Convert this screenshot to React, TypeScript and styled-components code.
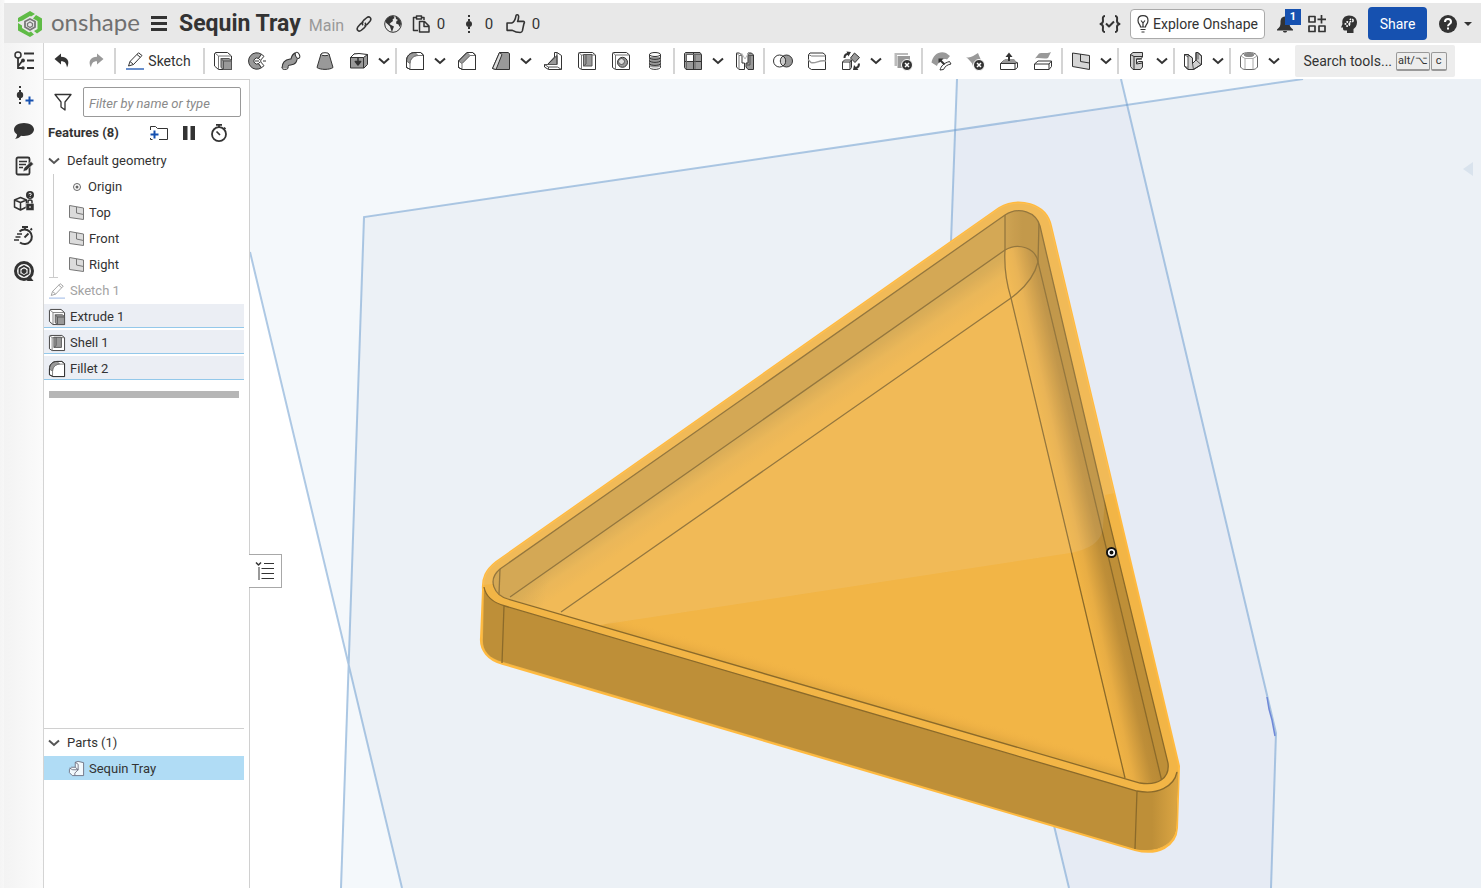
import React from "react";
import styled, { createGlobalStyle, css } from "styled-components";

const Global = createGlobalStyle`
  *, *::before, *::after { box-sizing: border-box; }
  body { margin: 0; background: #fff; }
  button, input { font: inherit; color: inherit; }
  svg { flex: none; }
`;

/* ---------- layout ---------- */

const Page = styled.div`
  display: flex;
  flex-direction: column;
  height: 100vh;
  padding: 3px 0 0 4px;
  overflow: hidden;
  background: linear-gradient(to right, #f4f4f4 0, #f7f7f7 4px, #fff 5px);
  color: #333;
  font-family: Roboto, "Liberation Sans", sans-serif;
  font-size: 14px;
  line-height: 20px;
`;

const Header = styled.header`
  display: flex;
  align-items: center;
  flex: none;
  height: 40px;
  padding: 1px 6px 0 13px;
  background: #e8e8e8;
`;

const Spacer = styled.div`
  flex: 1;
`;

const Body = styled.div`
  display: flex;
  flex: 1;
  min-height: 0;
`;

const Rail = styled.nav`
  display: flex;
  flex-direction: column;
  flex: none;
  width: 40px;
  border-right: 1px solid #d4d4d4;
  background: linear-gradient(to right, #f3f3f3, #fbfbfb);
`;

const Workspace = styled.main`
  display: flex;
  flex-direction: column;
  flex: 1;
  min-width: 0;
`;

const Toolbar = styled.div`
  display: flex;
  align-items: center;
  flex: none;
  height: 36px;
  padding-left: 1px;
  background: #fff;
`;

const Split = styled.div`
  display: flex;
  flex: 1;
  min-height: 0;
`;

const Sidebar = styled.aside`
  display: flex;
  flex-direction: column;
  flex: none;
  width: 206px;
  border: solid #d0d0d0;
  border-width: 1px 1px 0 0;
  background: #fff;
`;

const Viewport = styled.section`
  position: relative;
  flex: 1;
  min-width: 0;
  background: #fff;
`;

/* ---------- controls ---------- */

const bare = css`
  display: flex;
  align-items: center;
  justify-content: center;
  flex: none;
  padding: 0;
  border: 0;
  background: none;
  cursor: pointer;
`;

const RailButton = styled.button`
  ${bare}
  height: 35px;
`;

const ToolButton = styled.button`
  ${bare}
  width: 34px;
  height: 32px;
`;

const ChevronButton = styled.button`
  ${bare}
  width: 18px;
  height: 32px;
  padding-right: 2px;
`;

const SketchButton = styled.button`
  ${bare}
  gap: 4px;
  width: 85px;
  height: 32px;
  padding-right: 2px;
`;

const Separator = styled.span`
  flex: none;
  width: 2px;
  height: 26px;
  margin: 0 1px;
  background: #d4d4d4;
`;

const SearchButton = styled.button`
  ${bare}
  gap: 4px;
  width: 160px;
  height: 32px;
  margin-left: 11px;
  border-radius: 2px;
  background: #ededed;
`;

const Keys = styled.span`
  display: flex;
  gap: 1px;
`;

const Key = styled.kbd`
  display: flex;
  align-items: center;
  height: 19px;
  padding: 0 4px;
  border: 1px solid #999;
  border-bottom-width: 2px;
  border-radius: 2px;
  font-family: inherit;
  font-size: 11px;
  &:first-child { padding: 0 1px; }
`;

const HeaderButton = styled.button<{ $w: number }>`
  ${bare}
  width: ${(p) => p.$w}px;
  height: 32px;
`;

const Brand = styled.a`
  display: flex;
  align-items: center;
  gap: 8px;
  width: 127px;
  color: #707070;
  font-family: Lato, sans-serif;
  font-size: 24px;
  line-height: 30px;
  text-decoration: none;
`;

const BrandText = styled.span`
  padding-bottom: 4px;
`;

const Title = styled.h1`
  margin: 0 8px 0 5px;
  font-size: 23px;
  line-height: 32px;
  font-weight: 700;
  white-space: nowrap;
`;

const Branch = styled.span`
  width: 42px;
  padding-top: 4px;
  color: #999;
  font-size: 16px;
`;

const Counters = styled.div`
  display: flex;
  padding-left: 2px;
`;

const Counter = styled.button<{ $w: number; $gap?: number }>`
  ${bare}
  justify-content: flex-start;
  gap: ${(p) => p.$gap ?? 7}px;
  width: ${(p) => p.$w}px;
  font-size: 15px;
`;

const ExploreButton = styled.button`
  ${bare}
  gap: 4px;
  width: 135px;
  height: 30px;
  margin: 0 6px 0 5px;
  border: 1px solid #aaa;
  border-radius: 4px;
  background: #fff;
`;

const BellButton = styled.button`
  ${bare}
  position: relative;
  width: 28px;
  height: 32px;
`;

const Badge = styled.span`
  position: absolute;
  top: 1px;
  right: -2px;
  width: 16px;
  height: 16px;
  background: #1651b0;
  color: #fff;
  font-size: 11px;
  font-weight: 700;
  line-height: 16px;
`;

const ShareButton = styled.button`
  ${bare}
  width: 59px;
  height: 33px;
  margin: 0 8px 0 4px;
  border-radius: 4px;
  background: #1651b0;
  color: #fff;
`;

/* ---------- feature list ---------- */

const FilterRow = styled.div`
  display: flex;
  align-items: center;
  gap: 11px;
  padding: 7px 8px 0 10px;
`;

const FilterInput = styled.input`
  flex: 1;
  min-width: 0;
  height: 30px;
  padding: 2px 5px 0;
  border: 1px solid #999;
  border-radius: 2px;
  font-style: italic;
  font-size: 13px;
  &::placeholder { color: #8a8a8a; opacity: 1; }
`;

const FeatureHead = styled.div`
  display: flex;
  align-items: center;
  height: 31px;
  padding: 1px 15px 0 4px;
`;

const FeatureTitle = styled.h2`
  flex: 1;
  margin: 0;
  font-size: 13px;
  font-weight: 700;
`;

const HeadButton = styled.button`
  ${bare}
  width: 30px;
  height: 26px;
`;

const List = styled.ul`
  margin: 0;
  padding: 0;
  list-style: none;
`;

const Row = styled.li<{ $kind?: "group" | "plain" | "off" | "used" | "picked"; $indent?: number }>`
  display: flex;
  align-items: center;
  gap: ${(p) => (p.$kind === "group" ? 7 : 5)}px;
  height: 24px;
  margin: 0 5px 2px 0;
  padding: 1px 0 0 ${(p) => p.$indent ?? (p.$kind === "group" ? 4 : 5)}px;
  font-size: 13px;
  color: ${(p) => (p.$kind === "off" ? "#a3a3a3" : "#333")};
  ${(p) => p.$kind === "used" && "background: #ebeef4; box-shadow: inset 0 -1px #93c8ea;"}
  ${(p) => p.$kind === "picked" && "background: #b0dcf5;"}
`;

const Nested = styled.ul`
  position: relative;
  margin: 0 0 0 9px;
  padding: 0;
  border-left: 1px solid #ccc;
  list-style: none;
  &::after {
    content: "";
    position: absolute;
    left: -5px;
    bottom: 0;
    width: 9px;
    height: 1px;
    background: #ccc;
  }
`;

const RollbackBar = styled.div`
  height: 7px;
  margin: 9px 10px 0 5px;
  background: #b6b6b6;
`;

const Parts = styled.section`
  height: 160px;
  margin-top: auto;
`;

const PartsRule = styled.div`
  height: 1px;
  margin: 0 5px 1px 0;
  background: #d0d0d0;
`;

const ListTab = styled.button`
  ${bare}
  position: absolute;
  left: -1px;
  bottom: 300px;
  width: 33px;
  height: 34px;
  border: 1px solid #a8a8a8;
  border-left: 0;
  background: #fff;
`;

const Scene = styled.svg`
  display: block;
  width: 100%;
  height: 100%;
`;

/* ---------- icons ---------- */

const D = "#333";
const G = "#999";

type IconProps = { s?: number; w?: number; h?: number; box?: string; children: React.ReactNode };

const Icon = ({ s = 18, w, h, box, children }: IconProps) => (
  <svg
    width={w ?? s}
    height={h ?? s}
    viewBox={box ?? "0 0 18 18"}
    fill="none"
    stroke={D}
    strokeWidth="1"
    strokeLinejoin="round"
    overflow="visible"
    aria-hidden="true"
  >
    {children}
  </svg>
);

const Chevron = ({ tone = D }: { tone?: string }) => (
  <svg width="12" height="8" viewBox="0 0 12 8" fill="none" stroke={tone} strokeWidth="2" aria-hidden="true">
    <path d="M1 1.500 6 6l5-4.500" />
  </svg>
);

const shapes: Record<string, React.ReactNode> = {
  undo: (
    <path d="M8 1.500 1.500 7 8 12.500V9.200c3.500-.2 5.500 1.800 6 6.300C17.500 9 14 4.800 8 4.800Z" fill={D} stroke="none" />
  ),
  redo: (
    <path d="M10 1.500 16.500 7 10 12.500V9.200c-3.500-.2-5.500 1.800-6 6.300C.5 9 4 4.800 10 4.800Z" fill={G} stroke="none" />
  ),
  extrude: (
    <>
      <path d="M.5 1.500 1.500.5h12l4 3.500v13.500H4.500l-4-3.500Z" fill="#fff" />
      <path d="M1 1l3.500 3H17M4.500 4v13" stroke="#777" />
      <path d="M7 6.500h8l2.500 2v9H9.500L7 15.500Z" fill={G} stroke="#555" />
      <path d="M7 6.500l2.500 2.500h8M9.500 9v8.500" stroke="#555" />
    </>
  ),
  revolve: (
    <>
      <path d="M13.500 2.300A8.200 8.200 0 1 0 13.500 15.700L10.500 11.500A3 3 0 1 1 10.500 6.500Z" fill={G} />
      <path d="M13.500 2.300l2.500 2-3.500 4-2-1.800ZM13.500 15.700l2.500-2-3.500-4-2 1.800Z" fill="#fff" />
      <path d="M7 9h11" strokeDasharray="4 1.500 1 1.500" />
    </>
  ),
  sweep: (
    <>
      <path d="M3 16C3 9 8 10.500 10.500 9.500S11 5 14.500 3.500" stroke={D} strokeWidth="7" />
      <path d="M3 16.500C3 9 8 10.500 10.500 9.500S11 5 15 3.500" stroke={G} strokeWidth="5" />
      <ellipse cx="15.500" cy="3.300" rx="2" ry="3.200" transform="rotate(-25 15.500 3.300)" fill="#fff" />
      <path d="M-.3 16c1 2 5 2 6.600.2" />
    </>
  ),
  loft: (
    <>
      <path d="M5 2 1 15.500c3 2.500 13 2.500 16 0L13 2Z" fill={G} />
      <ellipse cx="9" cy="2.200" rx="4" ry="1.500" fill="#fff" />
    </>
  ),
  thicken: (
    <>
      <path d="M.5 5.500 4 2h5l4 1 4.500-.5v10L14 16H.5Z" fill={G} />
      <path d="M.5 5.500H13.500L17.500 2.500 9 1.500 4 2Z" fill="#fff" />
      <path d="M13.500 5.500V16" />
      <path d="M8 5v5M5.300 9.500 8 13l2.700-3.500Z" stroke={D} strokeWidth="1.500" fill={D} />
    </>
  ),
  fillet: (
    <>
      <path d="M.5 9C.5 4 4 .5 9 .5h5.500l3 2.500v14.500H4.500l-4-2Z" fill="#fff" />
      <path d="M.5 9C.5 4 4 .5 9 .5l3 3C7.500 3.500 4 7 4 11.500Z" fill={G} stroke="#777" />
      <path d="M4 17.500V11.500C4 7 7.500 3.500 12 3.500h5.500" stroke="#777" />
      <path d="M.5 15.500V9C.5 4 4 .5 9 .5h5.500l3 2.500v14.500H4.500Z" />
    </>
  ),
  chamfer: (
    <>
      <path d="M.5 9 9 .5h5.500l3 2.500v14.500H4.500l-4-2Z" fill="#fff" />
      <path d="M.5 9 9 .5 12 3.500 4 11.500Z" fill={G} stroke="#777" />
      <path d="M4 17.500V11.500L12 3.500h5.500" stroke="#777" />
      <path d="M.5 15.500V9L9 .5h5.500l3 2.500v14.500H4.500Z" />
    </>
  ),
  draft: (
    <>
      <path d="M.5 16.500 7.500.5H16l1.500 1v16H4Z" fill={G} />
      <path d="M.5 16.500 7.500.5l2.500 2L4 17.500Z" fill="#ddd" />
    </>
  ),
  rib: (
    <>
      <path d="M10.500.5H13L17.500 3.500v14H4.500L.5 15v-2.500h3L10.500 5Z" fill="#fff" />
      <path d="M3.500 12.500 13 3.500v9Z" fill={G} />
      <path d="M13 .5v12H.5l4 2.500h9L17.500 17.500M4.500 15v2.500" stroke="#555" />
    </>
  ),
  shell: (
    <>
      <path d="M.5 1.500 1.500.5h13l3 2.500v14.500h-14l-3-2Z" fill="#fff" />
      <path d="M3.500 3v14.500M.5.500 3.500 3H17.500" stroke="#777" />
      <path d="M5.500 2.500h8.500V14H5.500Z" fill={G} stroke="#555" />
      <path d="M5.500 14l2.500-2V2.500" stroke="#555" />
    </>
  ),
  hole: (
    <>
      <path d="M.5 1.500 1.500.5h13l3 2.500v14.500h-14l-3-2Z" fill="#fff" />
      <path d="M3.500 3v14.500M.5.500 3.500 3H17.500" stroke="#777" />
      <circle cx="10.500" cy="10.300" r="5" fill={G} />
      <circle cx="9.500" cy="9.500" r="3" fill="#ddd" stroke="#555" />
    </>
  ),
  thread: (
    <>
      <path d="M3.500 2.500v13c1.500 2.500 9.500 2.500 11 0v-13Z" fill="#fff" />
      <path d="M3.500 5v9c1.500 2 9.500 2 11 0V5Z" fill={G} stroke="none" />
      <ellipse cx="9" cy="2.500" rx="5.500" ry="2" fill="#fff" />
      <path d="M3 5.500c2 2.500 10 2.500 12 0M3 8.500c2 2.500 10 2.500 12 0M3 11.500c2 2.500 10 2.500 12 0" />
    </>
  ),
  pattern: (
    <>
      <path d="M.5 1.500 1.500.5H16l1.500 2v15H2l-1.500-2Z" fill={G} />
      <path d="M2.500 2.500H9V9H2.500Z" fill="#fff" stroke="none" />
      <path d="M9.500.5v17M.5 9.500h17" />
      <path d="M2.500 2v15M2.500 2.500H17M11 2v15" stroke="#666" />
    </>
  ),
  mirror: (
    <>
      <path d="M.5 1h3L6 3.500V11h2.500v6.500H3L.5 15Z" fill="#fff" />
      <path d="M3 3.500v14M.5 1 3 3.500H6" stroke="#777" />
      <path d="M17.500 3 15.500 1H12v10H10v4l2 2.500h5.500Z" fill={G} />
      <path d="M12 3.500h5M14 3.500V13h-3" stroke="#555" />
      <path d="M5.500 1 9 7l3.500-6" stroke="#bbb" />
    </>
  ),
  boolean: (
    <>
      <circle cx="12.500" cy="9" r="6" fill={G} />
      <circle cx="5.500" cy="9" r="6" fill="#fff" />
      <path d="M9 4a6 6 0 0 1 0 10 6 6 0 0 1 0-10Z" fill="#ccc" />
    </>
  ),
  split: (
    <>
      <path d="M.5 2.500 2 1h13l2.500 2v14.500h-14l-3-2Z" fill="#fff" />
      <path d="M.5 2.500 3.500 4h14" stroke="#777" />
      <path d="M0 7.500l3 3c5 1.500 8-3 15-1.500" stroke={G} strokeWidth="1.500" />
    </>
  ),
  transform: (
    <>
      <path d="M.5 10 2.500 8H9.500v7.500L8 17.500H.5Z" fill="#fff" />
      <path d="M.5 10H8v7.500M8 10l1.500-2" />
      <path d="M12.500 1 17.500 5.500 13 10.500 8.500 6Z" fill={G} />
      <path d="M2.500 6C2.500 3.500 4 2 6 2" strokeWidth="2" />
      <path d="M4.500-.5 9 0 6.500 4.500ZM12 13l-1 5 5.500 0Z" fill={D} stroke="none" />
      <path d="M17 11.500c0 3-1 4-3 4.500" strokeWidth="2" />
    </>
  ),
  remove: (
    <>
      <path d="M.5 1H14v2H3v11H.5Z" fill="#bbb" stroke="none" />
      <path d="M3.500 4H16v12H3.500Z" fill={G} stroke="none" />
      <circle cx="13" cy="13" r="5.500" fill={D} stroke="#fff" />
      <path d="M11 11l4 4M15 11l-4 4" stroke="#fff" strokeWidth="1.500" />
    </>
  ),
  face: (
    <>
      <path d="M-.5 10.500C1 3 7-1.500 14 1l4 3-3 3.500C10 6 7 9 5 14Z" fill={G} stroke="none" />
      <path d="M8 18c1-4 4-7 9.500-8.500L19 12c-3 .5-6 2-7.500 5.500Z" fill="#fff" />
      <path d="M12.500 12.500 8.500 8.500" strokeWidth="2" />
      <path d="M6.500 6.500h5l-5 5Z" fill={D} stroke="none" />
    </>
  ),
  surfaceRemove: (
    <>
      <path d="M0 5C4 7 8 3 12 1c1 3 3 6 4 11L7 14C6 10 3 8 0 5Z" fill={G} stroke="none" />
      <circle cx="13" cy="13" r="5.500" fill={D} stroke="#fff" />
      <path d="M11 11l4 4M15 11l-4 4" stroke="#fff" strokeWidth="1.500" />
    </>
  ),
  moveFace: (
    <>
      <path d="M.5 11.500 4 8.500h9.500L17.500 11v4.500L15 17.500H.5Z" fill="#fff" />
      <path d="M1 11.500 5 7h9l3 3.500-3 1Z" fill={G} stroke="none" />
      <path d="M.5 11.500H15V17.500M15 11.500l2.500-1" />
      <path d="M9 9V4" strokeWidth="2" />
      <path d="M5.500 5 9 .5 12.500 5Z" fill={D} stroke="none" />
    </>
  ),
  replaceFace: (
    <>
      <path d="M1 6.500 5 1.500c4-1.500 8 .5 12-1.500l-3 6C10 7.500 5 5 1 6.500Z" fill={G} stroke="none" />
      <path d="M.5 12 4 9h13.500v5.500L15 17.500H.5Z" fill="#fff" />
      <path d="M.5 12H15v5.500M15 12l2.500-3" />
    </>
  ),
  plane: (
    <>
      <path d="M.5 1 17.500 3.500v14L.5 14.500Z" fill="#d6d6d6" />
      <path d="M8.500 2v7.500l9 1.500" />
    </>
  ),
  frame: (
    <>
      <path d="M2.500 2.500 5 .5h9.500V5l-2 2H8.500v4l2-1.500h4V15l-2 2.500H5l-2.500-3Z" fill="#d0d0d0" />
      <path d="M2.500 2.500 6 4.500h8M6 4.500v13" />
      <path d="M8.500 7H14M8.500 7v5l6-1" />
    </>
  ),
  sheet: (
    <>
      <path d="M.5 2.500H4L8.500 6v5.500L12 8V.5h2L17.500 4v8.500L9.500 17.500H4L.5 14Z" fill="#d0d0d0" />
      <path d="M.5 2.500H4v11.500l-3.500 0Z" fill="#fff" stroke="none" />
      <path d="M.5 2.500 4 5v12.500M4 2.500V5M8.500 11.500 9.500 17.500M12 8l5 4.500M14 .5v7" stroke="#555" />
      <path d="M.5 2.500H4L8.500 6v5.500L12 8V.5h2L17.500 4v8.500L9.500 17.500H4L.5 14Z" />
    </>
  ),
  custom: (
    <>
      <path d="M2 2.500C3 0 15 0 16 2.500l1.500 2V15c-1 1.500-3 2.500-4.500 2.500H5C3.500 17.500 1.500 16.500.5 15V4.500Z" fill="#fff" stroke="#666" />
      <ellipse cx="9" cy="2.800" rx="5" ry="1.800" fill="#888" stroke="#888" />
      <path d="M5 6.500h8v11M5 6.500v11M1 4l4 2.500L13 6.500 17 4" stroke="#aaa" />
    </>
  ),
};

const Glyph = ({ name, s = 18 }: { name: string; s?: number }) => <Icon s={s}>{shapes[name]}</Icon>;

const Pencil = ({ s = 18, line = "#1651b0", tone = D }: { s?: number; line?: string; tone?: string }) => (
  <Icon s={s}>
    <path d="M2.500 14 4 9.500 12.500.8 16 3.500 7.500 12.500Z" stroke={tone} fill="#fff" />
    <path d="M4 9.500 7.500 12.500M11 2.500l3.300 2.800" stroke={tone} />
    <path d="M0 17h18" stroke={line} strokeWidth="1.300" />
  </Icon>
);

const PlaneSmall = () => (
  <Icon s={15} box="0 0 15 15">
    <path d="M.5.500 14.500 3v11.500L.5 12.500Z" fill="#dcdcdc" stroke="#777" />
    <path d="M7.500 2v6l7 1.500" stroke="#777" />
  </Icon>
);

/* ---------- tool bar content ---------- */

type Tool = { id: string; label: string; menu?: boolean } | "sep";

const tools: Tool[] = [
  { id: "extrude", label: "Extrude" },
  { id: "revolve", label: "Revolve" },
  { id: "sweep", label: "Sweep" },
  { id: "loft", label: "Loft" },
  { id: "thicken", label: "Thicken", menu: true },
  "sep",
  { id: "fillet", label: "Fillet", menu: true },
  { id: "chamfer", label: "Chamfer" },
  { id: "draft", label: "Draft", menu: true },
  { id: "rib", label: "Rib" },
  { id: "shell", label: "Shell" },
  { id: "hole", label: "Hole" },
  { id: "thread", label: "External thread" },
  "sep",
  { id: "pattern", label: "Linear pattern", menu: true },
  { id: "mirror", label: "Mirror" },
  "sep",
  { id: "boolean", label: "Boolean" },
  { id: "split", label: "Split" },
  { id: "transform", label: "Transform", menu: true },
  { id: "remove", label: "Delete part" },
  "sep",
  { id: "face", label: "Modify fillet" },
  { id: "surfaceRemove", label: "Delete face" },
  { id: "moveFace", label: "Move face" },
  { id: "replaceFace", label: "Replace face" },
  "sep",
  { id: "plane", label: "Plane", menu: true },
  "sep",
  { id: "frame", label: "Frame", menu: true },
  "sep",
  { id: "sheet", label: "Sheet metal", menu: true },
  "sep",
  { id: "custom", label: "Custom features", menu: true },
];

const railItems: { label: string; art: React.ReactNode }[] = [
  {
    label: "Feature list",
    art: (
      <Icon s={20} box="0 0 20 20">
        <circle cx="4" cy="4" r="3" strokeWidth="1.500" />
        <path d="M4 7v11M4 17h4.500M4 15.500l4.500-6" strokeWidth="1.800" />
        <circle cx="9" cy="17" r="1.700" fill={D} stroke="none" />
        <circle cx="9" cy="9.500" r="1.900" fill={D} stroke="none" />
        <path d="M10 2.500h10M13 9.500h7M13 17h7" strokeWidth="2" />
      </Icon>
    ),
  },
  {
    label: "Versions and history",
    art: (
      <Icon s={20} box="0 0 20 20">
        <path d="M6 0v20" strokeWidth="2" strokeDasharray="2 2" />
        <circle cx="6" cy="9" r="3.200" fill={D} stroke="none" />
        <path d="M15.500 10.500v8M11.500 14.500h8" stroke="#1651b0" strokeWidth="2" />
      </Icon>
    ),
  },
  {
    label: "Comments",
    art: (
      <Icon s={20} box="0 0 20 20">
        <path d="M10 2c5.500 0 10 2.800 10 6.500S15.500 15 10 15c-1 0-2-.1-3-.3C5.500 16.500 3.500 17.500 1 18c1.500-1.500 2-3 2-4.500C1 12 0 10.500 0 8.500 0 4.800 4.500 2 10 2Z" fill={D} stroke="none" />
      </Icon>
    ),
  },
  {
    label: "Notes",
    art: (
      <Icon s={20} box="0 0 20 20">
        <rect x="2.500" y="1.500" width="13" height="17" rx="1.500" strokeWidth="1.800" />
        <path d="M5 5.500h8M5 8.500h7M5 11.500h4" strokeWidth="1.500" />
        <path d="M9 15.500l1-3.500L17 5.500 19.500 8 12.500 14.500Z" fill={D} stroke="#f8f8f8" strokeWidth=".5" />
      </Icon>
    ),
  },
  {
    label: "Configurations",
    art: (
      <Icon s={20} box="0 0 20 20">
        <path d="M6.500 6.500 12.500 9v7l-6 3-6-3V9Z M.5 9l6 2.500 6-2.500M6.500 11.500V19" strokeWidth="1.500" />
        <circle cx="16" cy="4" r="4" fill={D} stroke="none" />
        <path d="M14.700 3.200c.2-1.400 2.600-1.300 2.600 0 0 .9-1.300.9-1.300 1.800M16 6v.8" stroke="#fff" />
        <rect x="12" y="12.500" width="8" height="7" fill={D} stroke="#fafafa" strokeWidth=".5" />
        <path d="M14 12.500v-2c0-2 4-2 4 0v2" strokeWidth="1.500" />
        <path d="M15 16h2" stroke="#fff" />
      </Icon>
    ),
  },
  {
    label: "Performance",
    art: (
      <Icon s={20} box="0 0 20 20">
        <path d="M5.500 5.500A7.300 7.300 0 1 1 6 16.500" strokeWidth="2" />
        <path d="M8 1h6M11 1v3M16.500 4l1.500-1.500M10.500 11.500l4-4" strokeWidth="1.800" />
        <path d="M3 8h5M1.500 11h5M0 14h5" strokeWidth="1.500" />
      </Icon>
    ),
  },
  {
    label: "Learning centre",
    art: (
      <Icon s={20} box="0 0 20 20">
        <circle cx="10" cy="10" r="8.500" strokeWidth="3" />
        <path d="M15 14l4.500 6H13Z" fill={D} stroke="none" />
        <path d="M10 5l4.500 2.500v5L10 15l-4.500-2.500v-5Z" strokeWidth="1.800" />
        <path d="M10 8l2 1v2.500L10 12.500 8 11.500V9Z" fill={D} />
      </Icon>
    ),
  },
];

const EDGE = "#8b6a2a";

const TrayScene = () => (
  <Scene viewBox="250 79 1231 809" preserveAspectRatio="xMinYMin slice" role="img" aria-label="Model view of the tray">
    <defs>
      <linearGradient id="corner" gradientUnits="userSpaceOnUse" x1="1152" y1="0" x2="1178" y2="0">
        <stop offset="0" stopColor="#be8f38" />
        <stop offset="1" stopColor="#dca643" />
      </linearGradient>
      <linearGradient id="backFillet" gradientUnits="userSpaceOnUse" x1="757" y1="424" x2="774" y2="449">
        <stop offset="0" stopColor="#d6a546" />
        <stop offset=".5" stopColor="#eab148" />
        <stop offset="1" stopColor="#f2b546" />
      </linearGradient>
      <linearGradient id="sideFillet" gradientUnits="userSpaceOnUse" x1="1059" y1="500" x2="1094" y2="492">
        <stop offset="0" stopColor="#f2b546" />
        <stop offset=".3" stopColor="#e8ad44" />
        <stop offset=".8" stopColor="#be8e38" />
        <stop offset="1" stopColor="#b98a36" />
      </linearGradient>
      <linearGradient id="frontFillet" gradientUnits="userSpaceOnUse" x1="850" y1="698" x2="854" y2="684">
        <stop offset="0" stopColor="#e2a940" />
        <stop offset=".4" stopColor="#edb044" />
        <stop offset="1" stopColor="#f2b546" stopOpacity="0" />
      </linearGradient>
      <linearGradient id="topWall" gradientUnits="userSpaceOnUse" x1="1004" y1="0" x2="1022" y2="0">
        <stop offset="0" stopColor="#cd9d42" />
        <stop offset="1" stopColor="#bf9038" />
      </linearGradient>
      <linearGradient id="leftGlow" gradientUnits="userSpaceOnUse" x1="505" y1="590" x2="545" y2="600">
        <stop offset="0" stopColor="#d4a344" />
        <stop offset="1" stopColor="#d4a344" stopOpacity="0" />
      </linearGradient>
      <clipPath id="opening">
        <path d="M500 569 1005 215C1019 206 1036 212 1040 226L1104 500 1168 763C1170 778 1158 786 1140 783L508 599C494 595 487 580 500 569Z" />
      </clipPath>
      <clipPath id="silhouette">
        <path d="M483 590C482 578 486 570 496 562L999 208C1018 197 1046 203 1051 226L1179 766 1177 828C1176 846 1158 856 1135 850L503 664C488 660 480 650 481 638Z" />
      </clipPath>
    </defs>

    <path d="M250 79H1481V888H402L250 252Z" fill="#f4f8fb" />
    <path d="M348 665 340 888H402Z" fill="#f4f8fb" />
    <path d="M364 217 1303 79H1481V888H402L348 665Z" fill="#ecf1f6" />
    <path d="M957 79H1121L1127 105 955 130Z" fill="#ecf1f6" />
    <path d="M955 130 1127 105 1276 733 1271 888H1069L946 377Z" fill="#e6ebf4" />
    <g stroke="#6f9fd0" strokeOpacity=".55" strokeWidth="2" fill="none">
      <path d="M250 252 402 888M341 888 364 217 1303 79" />
      <path d="M957 79 946 377 1069 888M1121 79 1276 733 1271 888" />
    </g>
    <path d="M1267 697 1269 709 1272 720 1275 736" stroke="#6f88d8" strokeWidth="1.500" fill="none" />
    <path d="M1463 169 1473 162V176Z" fill="#d9e3ed" />

    <path
      d="M483 590C482 578 486 570 496 562L999 208C1018 197 1046 203 1051 226L1179 766 1177 828C1176 846 1158 856 1135 850L503 664C488 660 480 650 481 638Z"
      fill="#f2b546"
      stroke="#ffba40"
      strokeWidth="2"
    />
    <g clipPath="url(#silhouette)">
      <path d="M484 587C486 598 494 603 505 606L1137 791C1157 795 1176 787 1178 770L1176 828C1174 844 1158 853 1135 849L503 662C488 658 482 650 483 638Z" fill="#be8f38" />
      <path d="M1137 791C1157 795 1176 787 1178 770L1176 828C1174 844 1158 853 1135 849Z" fill="url(#corner)" />
      <path d="M484 587C486 598 494 603 505 606L1137 791C1157 795 1174 787 1177 772M504 606 502 663M1137 791 1135 849" stroke={EDGE} strokeWidth="1.300" fill="none" />
    </g>

    <g clipPath="url(#opening)">
      <path d="M480 560 1000 190 1190 800 480 620Z" fill="#f2b546" />
      <path d="M480 570 1005 205V250L510 597 480 620Z" fill="#d2a143" />
      <path d="M510 597 1005 250 1011 298 561 612Z" fill="url(#backFillet)" />
      <path d="M505 599 560 562 600 585 561 616Z" fill="url(#leftGlow)" />
      <path d="M1005 205H1045V262H1038C1036 248 1018 242 1005 250Z" fill="url(#topWall)" />
      <path d="M1005 250C1018 242 1036 248 1038 262C1034 278 1022 290 1011 298C1006 282 1004 268 1005 250Z" fill="url(#sideFillet)" />
      <path d="M1011 298C1022 290 1034 278 1038 262L1164 790H1126Z" fill="url(#sideFillet)" />
      <path d="M1038 262 1040 220 1175 760 1175 790H1164Z" fill="#be8f38" />
      <path d="M600 626 640 612 1120 754 1126 779Z" fill="url(#frontFillet)" />
      <g stroke={EDGE} strokeWidth="1.300" fill="none">
        <path d="M510 597 1005 250C1018 242 1036 248 1038 262L1163 786" />
        <path d="M561 612 1011 298C1022 290 1034 278 1038 262L1039 222" />
        <path d="M1005 215V250C1004 268 1006 282 1011 298L1125 778" />
        <path d="M500 569 499 594" />
      </g>
    </g>
    <path d="M500 569 1005 215C1019 206 1036 212 1040 226L1104 500 1168 763C1170 778 1158 786 1140 783L508 599C494 595 487 580 500 569Z" fill="none" stroke={EDGE} strokeWidth="1.300" />
    <path
      d="M470 586 493 584C494 592 500 597 508 599L600 625 1070 553C1092 549 1102 540 1103 527L1105 495 1140 488 1060 190H990L470 550Z"
      fill="#e7ecf4"
      fillOpacity=".1"
      clipPath="url(#silhouette)"
    />
    <circle cx="1111.500" cy="552.500" r="5.500" fill="#111" />
    <circle cx="1111.500" cy="552.500" r="2.800" fill="#111" stroke="#fff" strokeWidth="1.600" />
  </Scene>
);

export default function App() {
  return (
    <Page>
      <Global />
      <Header>
        <Brand href="#home">
          <svg width="26" height="28" viewBox="0 0 26 28" fill="none" aria-hidden="true">
            <path d="M1 12V8L13 1l5 3-4 2.500-1-.5-7.500 4.500Z M1 13l4 2.500V18l7 4.500 2-1 3 3-4 2.500L1 20.500Z M19 5l6 3.500V20l-5 3.500-3-2.500 3.500-2V11L16 8.500Z" fill="#5fbb46" />
            <path d="M13 9l5 2.500v5.500L13 20l-5-3v-5.500Z" stroke="#777" strokeWidth="1.800" />
            <path d="M13 12l2.500 1.500v2.500L13 17.500 10.500 16v-2.500Z" stroke="#777" strokeWidth="1.300" />
          </svg>
          <BrandText>onshape</BrandText>
        </Brand>
        <HeaderButton $w={30} aria-label="Document menu">
          <svg width="16" height="16" viewBox="0 0 16 16" fill={D} aria-hidden="true">
            <path d="M0 0h16v3H0ZM0 6h16v3H0ZM0 12h16v3H0Z" />
          </svg>
        </HeaderButton>
        <Title>Sequin Tray</Title>
        <Branch>Main</Branch>
        <HeaderButton $w={26} aria-label="Copy link">
          <Icon s={16}>
            <path d="M8 10.500c-2-2-1-4 .5-5.500L12 2c3-2.500 6 .5 4 3.500L12.500 9.500c-1 1-2 1.200-3 .8M10 7.500c2 2 1 4-.5 5.500L6 16c-3 2.500-6-.5-4-3.500L5.500 8.500c1-1 2-1.200 3-.8" strokeWidth="1.700" />
          </Icon>
        </HeaderButton>
        <HeaderButton $w={33} aria-label="Public document">
          <Icon>
            <circle cx="9" cy="9" r="8.300" fill="#e8e8e8" />
            <path d="M3 3.500C6 1 8 1 9.500 1l1 2-2 1.500L9 6 7 7.500 5.500 9 7 10l3 1.500-1 2.500-1 3C7 15 6.500 13 6 11.500L3.500 9C2 8 1.500 7 1.500 6ZM11.500 1.500C15 2.500 17 6 17 9l-1.500 3-1-2.500-2.500-1 .5-2.500 1.500-1-2-1Z" fill={D} stroke="none" />
          </Icon>
        </HeaderButton>
        <Counters>
          <Counter $w={51} aria-label="Copies">
            <Icon>
              <path d="M6 15.500H1.500v-13h3M9 2.500h3V5M4.500 1h5v3h-5Z" strokeWidth="1.500" />
              <path d="M7.500 6.500h5L17 11v6H7.500ZM12 6.500V11.500h5" strokeWidth="1.500" />
            </Icon>
            0
          </Counter>
          <Counter $w={43} $gap={10} aria-label="Versions">
            <Icon w={12} h={18} box="0 0 12 18">
              <path d="M6 0v18" strokeWidth="2" strokeDasharray="2 2" />
              <circle cx="6" cy="9" r="3" fill={D} stroke="none" />
            </Icon>
            0
          </Counter>
          <Counter $w={40} aria-label="Likes">
            <Icon s={19}>
              <path d="M1 8.500h4.500C8 7.500 9 4.500 9.500 1.500c.2-1.200 2.500-1 2.500.8 0 1.700-.4 3-1 4.700h5.500c1.300 0 1 1.500.5 2L15.500 16c-.3 1-1 1.500-2 1.500-3 0-5-.5-7.500-2H1Z" strokeWidth="1.500" />
            </Icon>
            0
          </Counter>
        </Counters>
        <Spacer />
        <HeaderButton $w={30} aria-label="Variables">
          <Icon s={20} box="0 0 20 20">
            <path d="M5 2C2 2 3 5 3 7S2 9.500.5 10C2 10.500 3 11 3 13s-1 5 2 5M15 2c3 0 2 3 2 5s1 2.500 2.500 3c-1.500.5-2.500 1-2.500 3s1 5-2 5M6 9.500l3 3 5-5" strokeWidth="2" />
          </Icon>
        </HeaderButton>
        <ExploreButton>
          <Icon w={12} h={18} box="0 0 12 18">
            <path d="M3.500 12C3.500 9.500 1 9 1 5.500 1 2.500 3 .7 6 .7s5 1.800 5 4.800c0 3.500-2.500 4-2.500 6.500ZM3.500 14.500h5M4.500 17h3M6 12V8L4 5.500M6 8l2-2.500" strokeWidth="1.200" />
          </Icon>
          Explore Onshape
        </ExploreButton>
        <BellButton aria-label="Notifications">
          <Icon>
            <path d="M9 1.500c4 .3 4.500 3 4.500 6.500 0 3 1 4.500 3.500 6.500v1H1v-1C3.500 12.500 4.500 11 4.500 8c0-3.500.5-6.200 4.500-6.500ZM7 16h4c0 2-4 2-4 0Z" fill={D} stroke="none" />
          </Icon>
          <Badge>1</Badge>
        </BellButton>
        <HeaderButton $w={35} aria-label="Apps">
          <Icon>
            <path d="M1 1.500h6v5.500H1ZM1 11h6v5.500H1ZM11 11h6v5.500h-6ZM13.500 0v8.500M9.500 4.300h8.500" strokeWidth="1.700" />
          </Icon>
        </HeaderButton>
        <HeaderButton $w={30} aria-label="AI advisor">
          <Icon>
            <path d="M9 .5c5 0 8 3 8 7 0 3.500-2 5.500-3.500 6.500V18H7v-2.500H4.500C3 15.500 3 14 3 12.500H1L2.500 9C1.500 4 4.500.5 9 .5Z" fill={D} stroke="none" />
            <circle cx="7.500" cy="9" r="2" stroke="#fff" strokeDasharray="1.500 1" strokeWidth="1.800" />
            <circle cx="11.500" cy="5.500" r="1.600" stroke="#fff" strokeDasharray="1.500 1" strokeWidth="1.500" />
          </Icon>
        </HeaderButton>
        <ShareButton>Share</ShareButton>
        <HeaderButton $w={26} aria-label="Help">
          <Icon>
            <circle cx="9" cy="9" r="9" fill={D} stroke="none" />
            <path d="M6 7c0-4 6-4 6 0 0 2-3 2-3 4.200M9 12.500v2" stroke="#fff" strokeWidth="2" />
          </Icon>
        </HeaderButton>
        <HeaderButton $w={14} aria-label="Help menu">
          <svg width="8" height="4" viewBox="0 0 8 4" fill={D} aria-hidden="true">
            <path d="M0 0h8L4 4Z" />
          </svg>
        </HeaderButton>
      </Header>

      <Body>
        <Rail aria-label="Panels">
          {railItems.map((r) => (
            <RailButton key={r.label} aria-label={r.label}>
              {r.art}
            </RailButton>
          ))}
        </Rail>

        <Workspace>
          <Toolbar role="toolbar">
            <ToolButton aria-label="Undo"><Glyph name="undo" /></ToolButton>
            <ToolButton aria-label="Redo"><Glyph name="redo" /></ToolButton>
            <Separator />
            <SketchButton>
              <Pencil />
              Sketch
            </SketchButton>
            <Separator />
            {tools.map((t, i) =>
              t === "sep" ? (
                <Separator key={i} />
              ) : (
                <React.Fragment key={t.id}>
                  <ToolButton aria-label={t.label}><Glyph name={t.id} /></ToolButton>
                  {t.menu && (
                    <ChevronButton aria-label={`More ${t.label} tools`}><Chevron /></ChevronButton>
                  )}
                </React.Fragment>
              ),
            )}
            <SearchButton>
              Search tools...
              <Keys>
                <Key>alt/⌥</Key>
                <Key>c</Key>
              </Keys>
            </SearchButton>
          </Toolbar>

          <Split>
            <Sidebar>
              <FilterRow>
                <Icon>
                  <path d="M1 1.500h16L11 9v8l-4-3V9Z" strokeWidth="1.300" />
                </Icon>
                <FilterInput aria-label="Filter features" placeholder="Filter by name or type" />
              </FilterRow>
              <FeatureHead>
                <FeatureTitle>Features (8)</FeatureTitle>
                <HeadButton aria-label="Add folder">
                  <Icon>
                    <path d="M.5 6V2.500h5l2 2h10v11H9M.5 15.500h2M.5 14v1.500" />
                    <path d="M4.500 6.500v8M.5 10.500h8" stroke="#1651b0" strokeWidth="2" />
                  </Icon>
                </HeadButton>
                <HeadButton aria-label="Pause regeneration">
                  <Icon><path d="M3 2h4.500v14H3ZM10.500 2H15v14h-4.500Z" fill={D} stroke="none" /></Icon>
                </HeadButton>
                <HeadButton aria-label="Regeneration times">
                  <Icon>
                    <circle cx="9" cy="10.200" r="7" strokeWidth="1.800" />
                    <path d="M6 .8h6M9 1v2.500M14 3.500l1.500 1.500M6.500 7.500l3.500 3.500" strokeWidth="1.700" />
                  </Icon>
                </HeadButton>
              </FeatureHead>

              <List>
                <Row $kind="group"><Chevron tone="#555" />Default geometry</Row>
              </List>
              <Nested>
                <Row $indent={17}>
                  <Icon s={12} box="0 0 12 12">
                    <circle cx="6" cy="6" r="3.500" stroke="#666" />
                    <circle cx="6" cy="6" r="1.500" fill="#666" stroke="none" />
                  </Icon>
                  Origin
                </Row>
                {["Top", "Front", "Right"].map((n) => (
                  <Row key={n} $indent={15}><PlaneSmall />{n}</Row>
                ))}
              </Nested>
              <List>
                <Row $kind="off"><Pencil s={16} tone="#999" line="#a9c2ea" />Sketch 1</Row>
                <Row $kind="used"><Glyph name="extrude" s={16} />Extrude 1</Row>
                <Row $kind="used"><Glyph name="shell" s={16} />Shell 1</Row>
                <Row $kind="used"><Glyph name="fillet" s={16} />Fillet 2</Row>
              </List>
              <RollbackBar />

              <Parts>
                <PartsRule />
                <List>
                  <Row $kind="group"><Chevron tone="#555" />Parts (1)</Row>
                  <Row $kind="picked" $indent={25}>
                    <Icon s={15}>
                      <path d="M7.500 1.500 11 .5 17.500 2v15.500H4L.5 14V10L3 7.500h4.500Z" fill="#f2f9fd" stroke="#667" />
                      <path d="M7.500 1.500 11 4v6.500H4.500L.5 8.500M11 10.500l-4 4V17M7.500 7.500l3.500 3" stroke="#667" />
                    </Icon>
                    Sequin Tray
                  </Row>
                </List>
              </Parts>
            </Sidebar>

            <Viewport>
              <TrayScene />
              <ListTab aria-label="Toggle feature list">
                <Icon>
                  <path d="M8 1.500h10M5.500 6.500H18M5.500 11.500H18M5.500 16.500H18" strokeWidth="1.200" />
                  <path d="M0 .5 2.500 3 5 .5" strokeWidth="1.500" />
                  <path d="M3 5v13" stroke={G} strokeWidth="2" />
                </Icon>
              </ListTab>
            </Viewport>
          </Split>
        </Workspace>
      </Body>
    </Page>
  );
}
